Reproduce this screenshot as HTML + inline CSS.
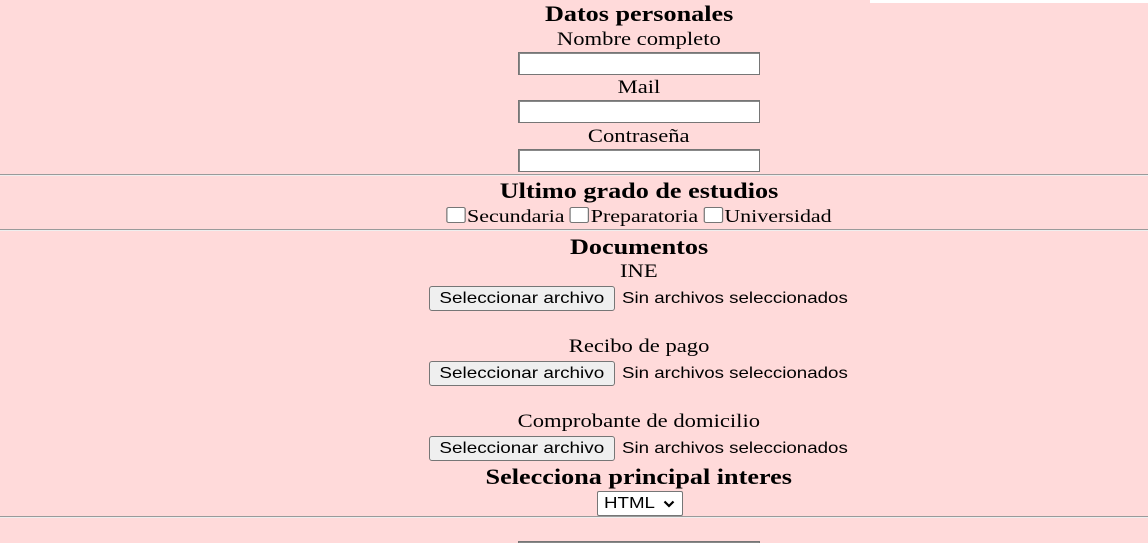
<!DOCTYPE html>
<html><head><meta charset="utf-8"><style>
html{overflow:hidden;height:543px}
body{margin:0;width:1148px;height:543px;background:#ffdada;position:relative;overflow:hidden;font-family:"Liberation Serif",serif;color:#000}
.c{position:absolute;left:0;width:1278px;text-align:center;white-space:nowrap}
.s{display:inline-block;transform:scaleX(1.19)}
.h{font-weight:bold;font-size:22px}
.l{font-size:19px}
.in{position:absolute;left:518px;width:240px;height:21px;background:#fff;border:1px solid #767676;box-shadow:inset 1px 1px 0 #888}
.hr{position:absolute;left:0;width:1148px;height:0;border-top:1px solid #9a9a9a;border-bottom:1px solid #eee}
.btn{position:absolute;left:429px;width:184px;height:23px;background:#efefef;border:1px solid #767676;border-radius:3px;font:16px "Liberation Sans",sans-serif;text-align:center;line-height:23px;color:#000;white-space:nowrap}
.st{position:absolute;left:622px;font:16px "Liberation Sans",sans-serif;line-height:25px;white-space:nowrap;transform:scaleX(1.17);transform-origin:0 0}
.cb{display:inline-block;width:14px;height:14px;border:1px solid #767676;border-radius:2px;background:#fff;vertical-align:-1px;margin-right:1px}
</style></head><body>
<div style="position:absolute;left:870px;top:0;width:278px;height:3px;background:#fff"></div>
<div class="c h" style="top:1px"><span class="s">Datos personales</span></div>
<div class="c l" style="top:29px"><span class="s">Nombre completo</span></div>
<div class="in" style="top:52px"></div>
<div class="c l" style="top:77px"><span class="s">Mail</span></div>
<div class="in" style="top:100px"></div>
<div class="c l" style="top:126px"><span class="s">Contraseña</span></div>
<div class="in" style="top:149px"></div>
<div class="hr" style="top:174px"></div>
<div class="c h" style="top:178px"><span class="s">Ultimo grado de estudios</span></div>
<div class="c l" style="top:206px;font-size:18px"><span class="s" style="transform:scaleX(1.22)"><span class="cb"></span>Secundaria <span class="cb"></span>Preparatoria <span class="cb"></span>Universidad</span></div>
<div class="hr" style="top:229px"></div>
<div class="c h" style="top:234px"><span class="s">Documentos</span></div>
<div class="c l" style="top:261px"><span class="s">INE</span></div>
<div class="btn" style="top:286px"><span class="s" style="transform:scaleX(1.18)">Seleccionar archivo</span></div><div class="st" style="top:286px">Sin archivos seleccionados</div>
<div class="c l" style="top:336px"><span class="s">Recibo de pago</span></div>
<div class="btn" style="top:361px"><span class="s" style="transform:scaleX(1.18)">Seleccionar archivo</span></div><div class="st" style="top:361px">Sin archivos seleccionados</div>
<div class="c l" style="top:411px"><span class="s">Comprobante de domicilio</span></div>
<div class="btn" style="top:436px"><span class="s" style="transform:scaleX(1.18)">Seleccionar archivo</span></div><div class="st" style="top:436px">Sin archivos seleccionados</div>
<div class="c h" style="top:464px"><span class="s">Selecciona principal interes</span></div>
<div style="position:absolute;left:597px;top:491px;width:84px;height:23px;background:#fff;border:1px solid #767676;border-radius:2px;font:16px 'Liberation Sans',sans-serif;line-height:23px">
<span style="position:absolute;left:6px;transform:scaleX(1.17);transform-origin:0 0">HTML</span>
<svg style="position:absolute;left:65px;top:8px" width="12" height="8" viewBox="0 0 12 8"><path d="M1.5 1.5L6 6L10.5 1.5" stroke="#000" stroke-width="2.2" fill="none"/></svg>
</div>
<div class="hr" style="top:516px"></div>
<div class="in" style="top:541px"></div>
</body></html>
